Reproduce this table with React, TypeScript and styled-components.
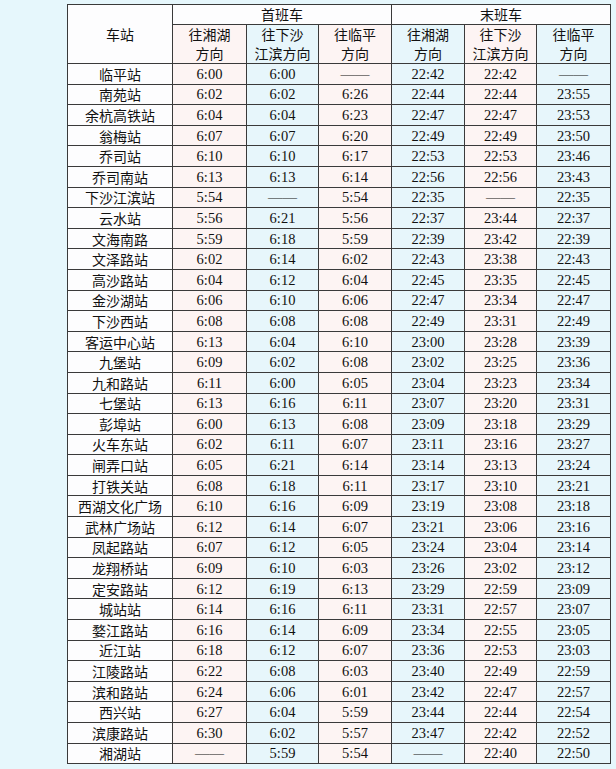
import React from 'react';
import styled, { createGlobalStyle } from 'styled-components';

const GlobalStyle = createGlobalStyle`
  html, body {
    margin: 0;
    padding: 0;
    background: #e6f7fc;
  }
`;

const PINK = '#fdf4f3';
const BLUE = '#e7f6fb';
const WHITE = '#fdfdfe';

const Page = styled.div`
  padding: 4px 6px 4px 67px;
  min-height: 769px;
  box-sizing: border-box;
  background: #e6f7fc;
  font-family: 'Liberation Serif', 'Noto Sans CJK SC', serif;
  color: #111;
`;

const Table = styled.table`
  border-collapse: collapse;
  table-layout: fixed;
  width: 544px;
  font-size: 14px;
  border: 1.5px solid #333;
`;

const HeadCell = styled.th<{ $bg?: string; $tall?: boolean }>`
  border: 1px solid #3a3a3a;
  background: ${p => p.$bg || WHITE};
  font-weight: normal;
  text-align: center;
  vertical-align: middle;
  padding: 0;
  line-height: 19px;
  height: ${p => (p.$tall ? '38px' : '18px')};
  font-family: 'Noto Sans CJK SC', sans-serif;
  font-size: 14px;
`;

const Cell = styled.td<{ $bg?: string; $cjk?: boolean }>`
  border: 1px solid #3a3a3a;
  background: ${p => p.$bg || WHITE};
  text-align: center;
  vertical-align: middle;
  padding: 0;
  height: 19.6px;
  line-height: 18px;
  font-family: ${p =>
    p.$cjk ? "'Noto Sans CJK SC', sans-serif" : "'Liberation Serif', serif"};
  font-size: ${p => (p.$cjk ? '14px' : '14.5px')};
  white-space: nowrap;
`;

const colBgs = [PINK, BLUE, PINK, BLUE, PINK, BLUE];
const widths = [105, 74, 72, 73, 73, 72, 74];

const D = '——';

const rows: [string, string, string, string, string, string, string][] = [
  ['临平站', '6:00', '6:00', D, '22:42', '22:42', D],
  ['南苑站', '6:02', '6:02', '6:26', '22:44', '22:44', '23:55'],
  ['余杭高铁站', '6:04', '6:04', '6:23', '22:47', '22:47', '23:53'],
  ['翁梅站', '6:07', '6:07', '6:20', '22:49', '22:49', '23:50'],
  ['乔司站', '6:10', '6:10', '6:17', '22:53', '22:53', '23:46'],
  ['乔司南站', '6:13', '6:13', '6:14', '22:56', '22:56', '23:43'],
  ['下沙江滨站', '5:54', D, '5:54', '22:35', D, '22:35'],
  ['云水站', '5:56', '6:21', '5:56', '22:37', '23:44', '22:37'],
  ['文海南路', '5:59', '6:18', '5:59', '22:39', '23:42', '22:39'],
  ['文泽路站', '6:02', '6:14', '6:02', '22:43', '23:38', '22:43'],
  ['高沙路站', '6:04', '6:12', '6:04', '22:45', '23:35', '22:45'],
  ['金沙湖站', '6:06', '6:10', '6:06', '22:47', '23:34', '22:47'],
  ['下沙西站', '6:08', '6:08', '6:08', '22:49', '23:31', '22:49'],
  ['客运中心站', '6:13', '6:04', '6:10', '23:00', '23:28', '23:39'],
  ['九堡站', '6:09', '6:02', '6:08', '23:02', '23:25', '23:36'],
  ['九和路站', '6:11', '6:00', '6:05', '23:04', '23:23', '23:34'],
  ['七堡站', '6:13', '6:16', '6:11', '23:07', '23:20', '23:31'],
  ['彭埠站', '6:00', '6:13', '6:08', '23:09', '23:18', '23:29'],
  ['火车东站', '6:02', '6:11', '6:07', '23:11', '23:16', '23:27'],
  ['闸弄口站', '6:05', '6:21', '6:14', '23:14', '23:13', '23:24'],
  ['打铁关站', '6:08', '6:18', '6:11', '23:17', '23:10', '23:21'],
  ['西湖文化广场', '6:10', '6:16', '6:09', '23:19', '23:08', '23:18'],
  ['武林广场站', '6:12', '6:14', '6:07', '23:21', '23:06', '23:16'],
  ['凤起路站', '6:07', '6:12', '6:05', '23:24', '23:04', '23:14'],
  ['龙翔桥站', '6:09', '6:10', '6:03', '23:26', '23:02', '23:12'],
  ['定安路站', '6:12', '6:19', '6:13', '23:29', '22:59', '23:09'],
  ['城站站', '6:14', '6:16', '6:11', '23:31', '22:57', '23:07'],
  ['婺江路站', '6:16', '6:14', '6:09', '23:34', '22:55', '23:05'],
  ['近江站', '6:18', '6:12', '6:07', '23:36', '22:53', '23:03'],
  ['江陵路站', '6:22', '6:08', '6:03', '23:40', '22:49', '22:59'],
  ['滨和路站', '6:24', '6:06', '6:01', '23:42', '22:47', '22:57'],
  ['西兴站', '6:27', '6:04', '5:59', '23:44', '22:44', '22:54'],
  ['滨康路站', '6:30', '6:02', '5:57', '23:47', '22:42', '22:52'],
  ['湘湖站', D, '5:59', '5:54', D, '22:40', '22:50'],
];

const directions: [string, string][] = [
  ['往湘湖', '方向'],
  ['往下沙', '江滨方向'],
  ['往临平', '方向'],
  ['往湘湖', '方向'],
  ['往下沙', '江滨方向'],
  ['往临平', '方向'],
];

export default function App() {
  return (
    <Page>
      <GlobalStyle />
      <Table>
        <colgroup>
          {widths.map((w, i) => (
            <col key={i} style={{ width: w }} />
          ))}
        </colgroup>
        <thead>
          <tr>
            <HeadCell rowSpan={2}>车站</HeadCell>
            <HeadCell colSpan={3}>首班车</HeadCell>
            <HeadCell colSpan={3}>末班车</HeadCell>
          </tr>
          <tr>
            {directions.map(([a, b], i) => (
              <HeadCell key={i} $bg={colBgs[i]} $tall>
                {a}
                <br />
                {b}
              </HeadCell>
            ))}
          </tr>
        </thead>
        <tbody>
          {rows.map(([name, ...times]) => (
            <tr key={name}>
              <Cell $cjk>{name}</Cell>
              {times.map((t, i) => (
                <Cell key={i} $bg={colBgs[i]}>
                  {t}
                </Cell>
              ))}
            </tr>
          ))}
        </tbody>
      </Table>
    </Page>
  );
}
